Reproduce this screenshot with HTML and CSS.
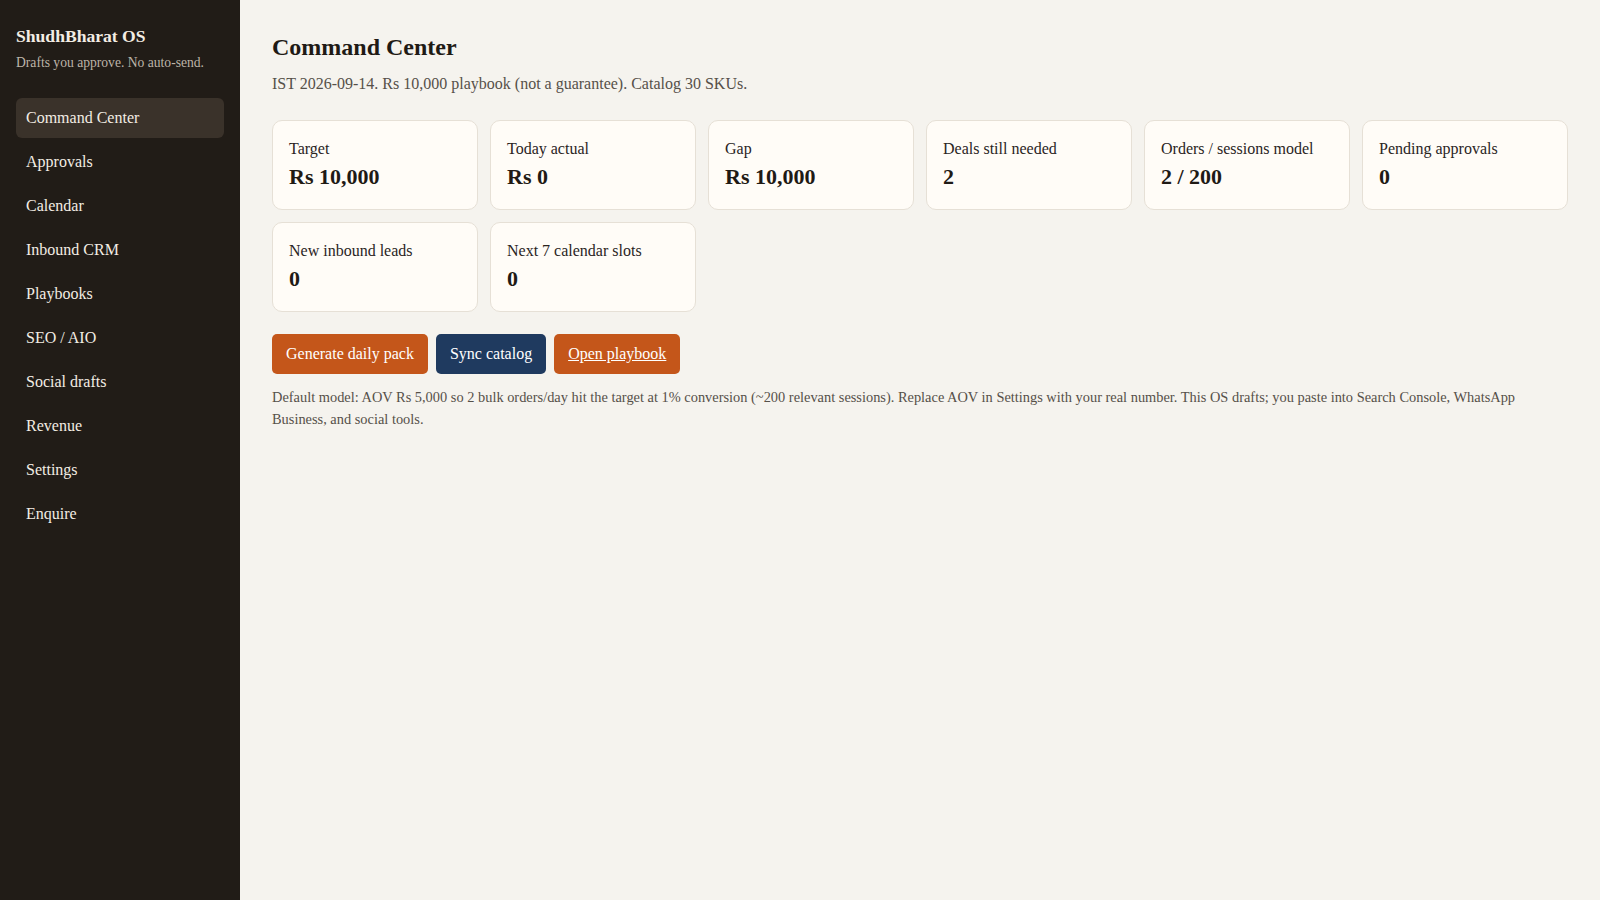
FILE: index.html
```html
<!doctype html>
<html lang="en">
<head>
    <meta charset="UTF-8">
    <meta name="viewport" content="width=device-width, initial-scale=1.0">
    <title>ShudhBharat OS - Command Center</title>
    <link rel="stylesheet" href="styles.css">
</head>
<body>
    <aside class="sidebar">
        <div class="brand">ShudhBharat OS</div>
        <div class="brand-note">Drafts you approve. No auto-send.</div>
        <nav class="nav">
            <a class="nav-item active" href="#">Command Center</a>
            <a class="nav-item" href="#">Approvals</a>
            <a class="nav-item" href="#">Calendar</a>
            <a class="nav-item" href="#">Inbound CRM</a>
            <a class="nav-item" href="#">Playbooks</a>
            <a class="nav-item" href="#">SEO / AIO</a>
            <a class="nav-item" href="#">Social drafts</a>
            <a class="nav-item" href="#">Revenue</a>
            <a class="nav-item" href="#">Settings</a>
            <a class="nav-item" href="#">Enquire</a>
        </nav>
    </aside>

    <main class="main">
        <h1>Command Center</h1>
        <p class="lede">IST 2026-09-14. Rs 10,000 playbook (not a guarantee). Catalog 30 SKUs.</p>

        <div class="stats">
            <div class="card">
                <div class="card-label">Target</div>
                <div class="card-value">Rs 10,000</div>
            </div>
            <div class="card">
                <div class="card-label">Today actual</div>
                <div class="card-value">Rs 0</div>
            </div>
            <div class="card">
                <div class="card-label">Gap</div>
                <div class="card-value">Rs 10,000</div>
            </div>
            <div class="card">
                <div class="card-label">Deals still needed</div>
                <div class="card-value">2</div>
            </div>
            <div class="card">
                <div class="card-label">Orders / sessions model</div>
                <div class="card-value">2 / 200</div>
            </div>
            <div class="card">
                <div class="card-label">Pending approvals</div>
                <div class="card-value">0</div>
            </div>
            <div class="card">
                <div class="card-label">New inbound leads</div>
                <div class="card-value">0</div>
            </div>
            <div class="card">
                <div class="card-label">Next 7 calendar slots</div>
                <div class="card-value">0</div>
            </div>
        </div>

        <div class="actions">
            <button class="btn btn-primary">Generate daily pack</button>
            <button class="btn btn-dark">Sync catalog</button>
            <a class="btn btn-primary" href="#">Open playbook</a>
        </div>

        <p class="note">Default model: AOV Rs 5,000 so 2 bulk orders/day hit the target at 1% conversion (~200 relevant sessions). Replace AOV in Settings with your real number. This OS drafts; you paste into Search Console, WhatsApp Business, and social tools.</p>
    </main>
</body>
</html>
```

FILE: styles.css
```css
* {
    box-sizing: border-box;
}

body {
    margin: 0;
    font-family: 'Liberation Serif', 'Times New Roman', serif;
    background: #f5f3ee;
    color: #1f1a15;
    display: flex;
    min-height: 100vh;
}

/* Sidebar */
.sidebar {
    width: 240px;
    flex-shrink: 0;
    background: #211c17;
    color: #f3ede4;
    padding: 26px 16px 24px;
}

.brand {
    font-size: 17.6px;
    font-weight: bold;
}

.brand-note {
    margin-top: 8px;
    font-size: 13.6px;
    color: #bdb4a8;
}

.nav {
    display: flex;
    flex-direction: column;
    gap: 4px;
    margin-top: 27px;
}

.nav-item {
    display: block;
    padding: 10px;
    line-height: 20px;
    font-size: 16px;
    color: #f3ede4;
    text-decoration: none;
    border-radius: 6px;
}

.nav-item.active {
    background: #3a322a;
}

/* Main area */
.main {
    flex: 1;
    padding: 34px 32px 32px;
}

h1 {
    margin: 0;
    font-size: 24px;
}

.lede {
    margin: 14px 0 27px;
    font-size: 16px;
    color: #555049;
}

.stats {
    display: grid;
    grid-template-columns: repeat(6, 1fr);
    gap: 12px;
}

.card {
    background: #fffcf7;
    border: 1px solid #e6e0d6;
    border-radius: 10px;
    padding: 16px 16px 19px;
}

.card-label {
    font-size: 16px;
    line-height: 24px;
    color: #2a241e;
}

.card-value {
    margin-top: 3px;
    font-size: 22px;
    line-height: 26px;
    font-weight: bold;
}

.actions {
    display: flex;
    gap: 8px;
    margin-top: 22px;
}

.btn {
    display: inline-block;
    height: 40px;
    padding: 0 14px;
    line-height: 40px;
    font-family: inherit;
    font-size: 16px;
    color: #fff;
    border: none;
    border-radius: 5px;
    cursor: pointer;
}

.btn-primary {
    background: #c4561a;
}

.btn-dark {
    background: #1f3a5f;
}

a.btn {
    text-decoration: underline;
}

.note {
    margin: 12px 0 0;
    font-size: 14.4px;
    line-height: 22px;
    color: #555049;
}
```
